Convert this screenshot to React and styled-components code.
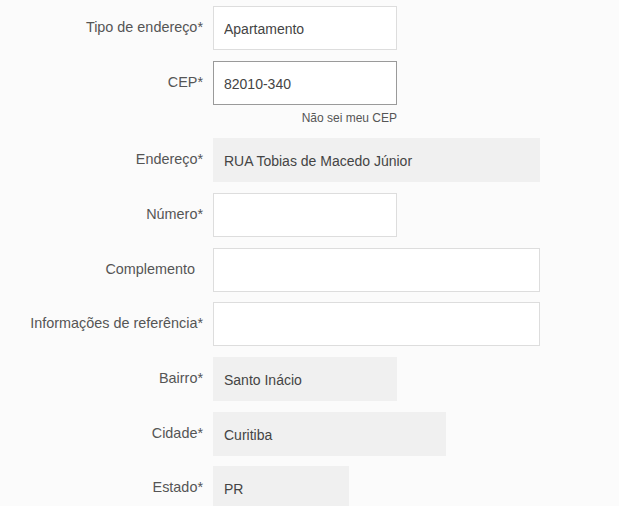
import styled, { createGlobalStyle } from 'styled-components'

const GlobalStyle = createGlobalStyle`
  html, body {
    margin: 0;
    padding: 0;
    background: #ffffff;
    font-family: "Liberation Sans", Arial, sans-serif;
  }
`

const fields = [
  { label: 'Tipo de endereço', required: true, value: 'Apartamento', width: 184 },
  { label: 'CEP', required: true, value: '82010-340', width: 184, focused: true, helper: 'Não sei meu CEP' },
  { label: 'Endereço', required: true, value: 'RUA Tobias de Macedo Júnior', width: 327, locked: true },
  { label: 'Número', required: true, value: '', width: 184 },
  { label: 'Complemento', required: false, value: '', width: 327 },
  { label: 'Informações de referência', required: true, value: '', width: 327 },
  { label: 'Bairro', required: true, value: 'Santo Inácio', width: 184, locked: true },
  { label: 'Cidade', required: true, value: 'Curitiba', width: 233, locked: true },
  { label: 'Estado', required: true, value: 'PR', width: 136, locked: true },
]

export default function App() {
  return (
    <>
      <GlobalStyle />
      <Page>
        <Form>
          {fields.map((f) => (
            <Group key={f.label}>
              <Field>
                <Label $optional={!f.required}>
                  {f.label}
                  {f.required && '*'}
                </Label>
                <Input
                  readOnly
                  value={f.value}
                  $width={f.width}
                  $locked={f.locked}
                  $focused={f.focused}
                />
              </Field>
              {f.helper && <Helper $width={f.width}>{f.helper}</Helper>}
            </Group>
          ))}
        </Form>
      </Page>
    </>
  )
}

const Page = styled.div`
  height: 506px;
  overflow: hidden;
  background: #fbfbfb;
`

const Form = styled.div`
  display: flex;
  flex-direction: column;
  gap: 10.67px;
  padding-top: 6px;
`

const Group = styled.div`
  display: flex;
  flex-direction: column;
`

const Field = styled.div`
  display: flex;
  align-items: center;
  gap: 10px;
`

const Label = styled.label`
  width: 203px;
  flex-shrink: 0;
  box-sizing: border-box;
  padding-right: ${({ $optional }) => ($optional ? '8px' : '0')};
  text-align: right;
  color: #555555;
  font-size: 14.4px;
  line-height: 16px;
  margin-top: -2px;
`

const Input = styled.input`
  width: ${({ $width }) => $width}px;
  height: 44px;
  box-sizing: border-box;
  margin: 0;
  padding: 2px 10px 0;
  border: 1px solid
    ${({ $locked, $focused }) => ($locked ? '#f0f0f0' : $focused ? '#9a9a9a' : '#dddddd')};
  border-radius: 0;
  background: ${({ $locked }) => ($locked ? '#f0f0f0' : '#ffffff')};
  color: #444444;
  font-family: "Liberation Sans", Arial, sans-serif;
  font-size: 14px;
  outline: none;
`

const Helper = styled.div`
  margin-left: 213px;
  width: ${({ $width }) => $width}px;
  padding: 5px 0 2px;
  text-align: right;
  color: #555555;
  font-size: 12px;
  line-height: 16px;
`
